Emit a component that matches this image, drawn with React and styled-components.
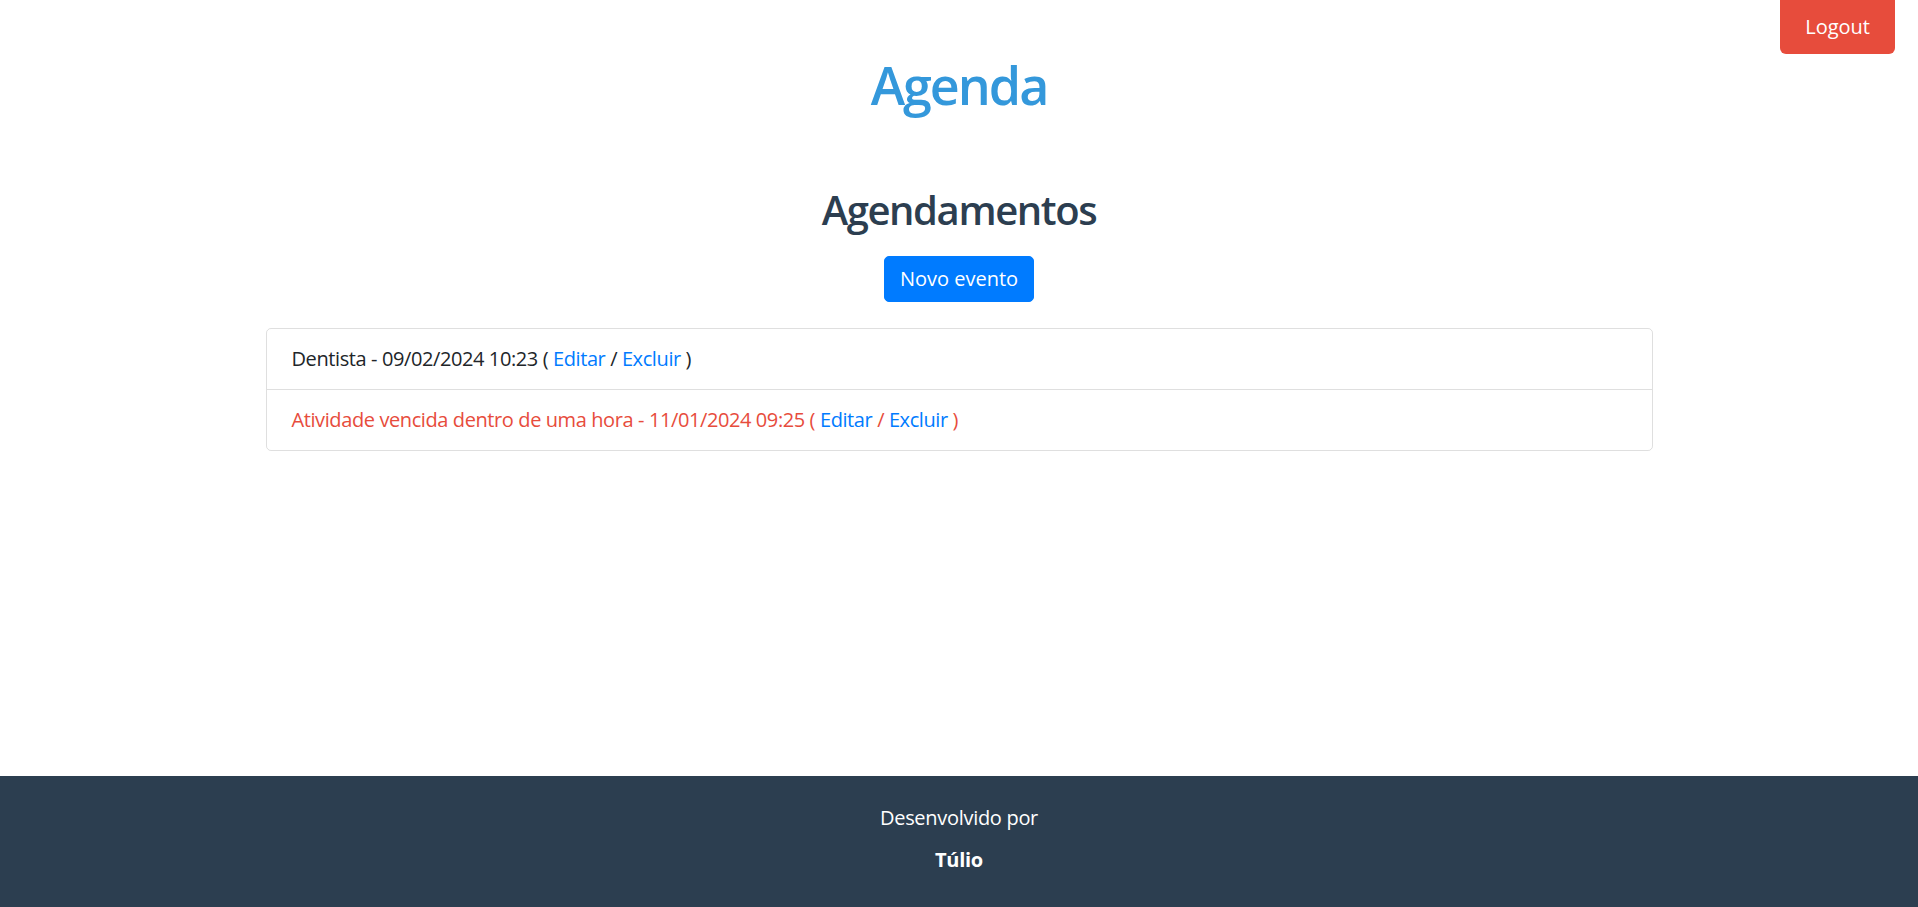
import React from "react";
import styled, { createGlobalStyle } from "styled-components";

const GlobalStyle = createGlobalStyle`
  html, body {
    margin: 0;
    padding: 0;
    background: #fff;
  }
  body {
    font-family: "Open Sans", "Noto Sans", sans-serif;
    font-size: 20px;
    line-height: 1.5;
    color: #212529;
  }
  * {
    box-sizing: border-box;
  }
`;

const Page = styled.div`
  min-height: 100vh;
  display: flex;
  flex-direction: column;
`;

const Header = styled.header`
  display: grid;
  grid-template-columns: 1fr auto 1fr;
  align-items: start;
`;

const Title = styled.h1`
  grid-column: 2;
  margin: 54px 0 0;
  font-size: 52px;
  font-weight: 600;
  line-height: 1.2;
  letter-spacing: -2px;
  color: #3498db;
`;

const LogoutButton = styled.button`
  grid-column: 3;
  justify-self: end;
  margin-right: 23px;
  padding: 12px 25px;
  border: none;
  border-radius: 0 0 6px 6px;
  background: #e74c3c;
  color: #fff;
  font-family: inherit;
  font-size: 20px;
  line-height: 30px;
  cursor: pointer;
`;

const Main = styled.main`
  flex: 1;
  display: flex;
  flex-direction: column;
  align-items: center;
`;

const Container = styled.div`
  width: 100%;
  max-width: 1425px;
  padding: 0 19px;
  display: flex;
  flex-direction: column;
  align-items: center;
`;

const SectionTitle = styled.h2`
  margin: 70px 0 22px;
  font-size: 40px;
  font-weight: 600;
  line-height: 1.2;
  letter-spacing: -1.4px;
  color: #2c3e50;
`;

const PrimaryButton = styled.button`
  padding: 7px 15px;
  border: 1px solid #007bff;
  border-radius: 5px;
  background: #007bff;
  color: #fff;
  font-family: inherit;
  font-size: 20px;
  line-height: 30px;
  cursor: pointer;
`;

const List = styled.ul`
  width: 100%;
  margin: 26px 0 0;
  padding: 0;
  list-style: none;
  border: 1px solid rgba(0, 0, 0, 0.125);
  border-radius: 5px;
`;

const Item = styled.li`
  padding: 15px 25px;
  line-height: 30px;
  letter-spacing: -0.4px;
  color: ${(p) => (p.$overdue ? "#e74c3c" : "#212529")};
  & + & {
    border-top: 1px solid rgba(0, 0, 0, 0.125);
  }
`;

const Action = styled.a`
  color: #007bff;
  text-decoration: none;
  cursor: pointer;
`;

const Footer = styled.footer`
  background: #2c3e50;
  color: #fff;
  text-align: center;
  padding: 27px 0 32px;
  display: flex;
  flex-direction: column;
  gap: 12px;
`;

const FooterLine = styled.p`
  margin: 0;
  line-height: 30px;
  letter-spacing: -0.3px;
  font-weight: ${(p) => (p.$strong ? 700 : 400)};
`;

const events = [
  { id: 1, title: "Dentista", date: "09/02/2024 10:23", overdue: false },
  {
    id: 2,
    title: "Atividade vencida dentro de uma hora",
    date: "11/01/2024 09:25",
    overdue: true,
  },
];

export default function App() {
  return (
    <>
      <GlobalStyle />
      <Page>
        <Header>
          <Title>Agenda</Title>
          <LogoutButton>Logout</LogoutButton>
        </Header>
        <Main>
          <Container>
            <SectionTitle>Agendamentos</SectionTitle>
            <PrimaryButton>Novo evento</PrimaryButton>
            <List>
              {events.map((ev) => (
                <Item key={ev.id} $overdue={ev.overdue}>
                  {ev.title} - {ev.date} ( <Action>Editar</Action> /{" "}
                  <Action>Excluir</Action> )
                </Item>
              ))}
            </List>
          </Container>
        </Main>
        <Footer>
          <FooterLine>Desenvolvido por</FooterLine>
          <FooterLine $strong>Túlio</FooterLine>
        </Footer>
      </Page>
    </>
  );
}
